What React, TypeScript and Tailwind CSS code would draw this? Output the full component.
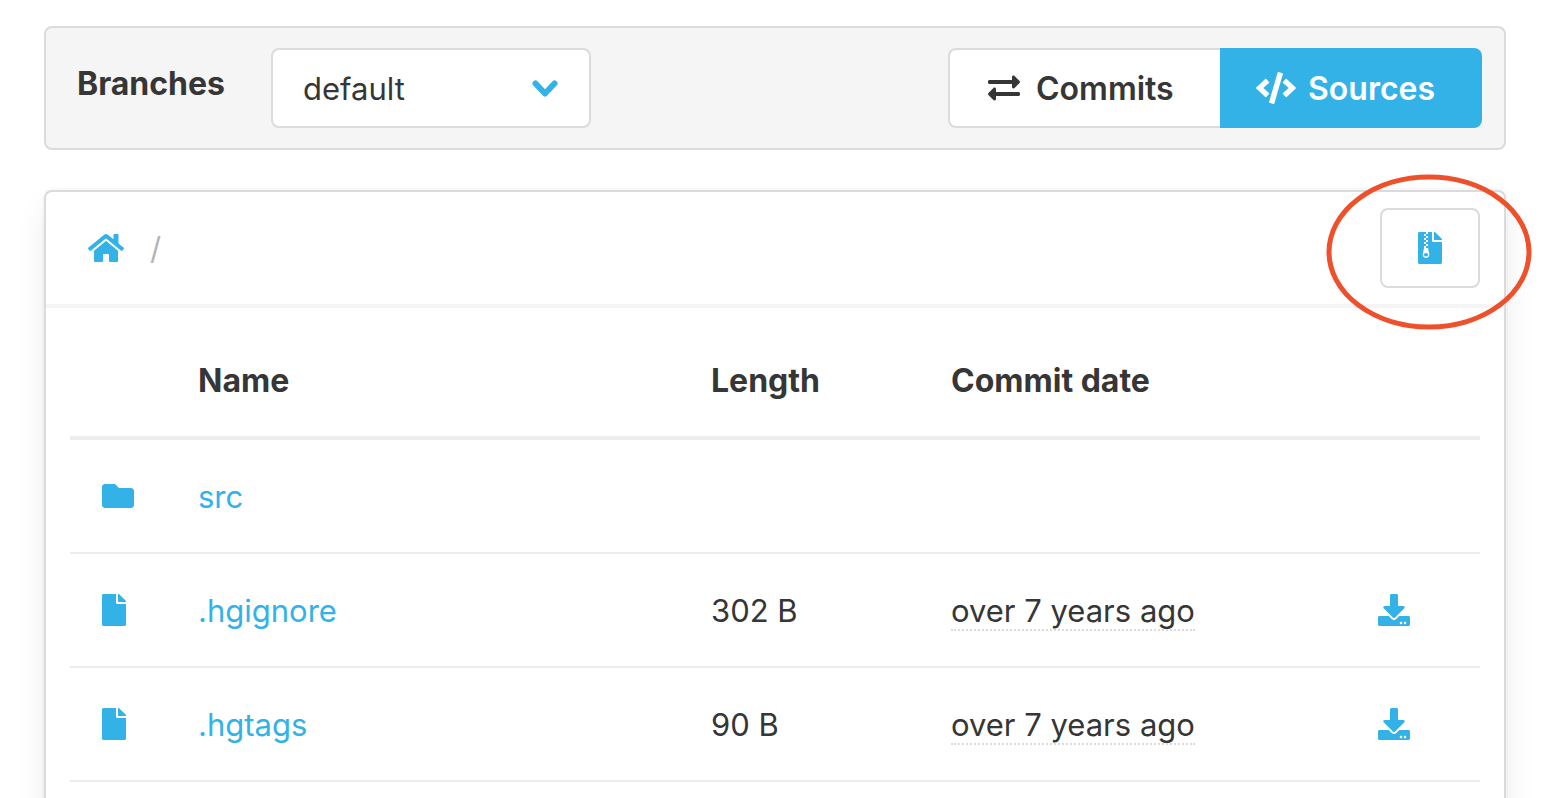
import { FaCode, FaDownload, FaExchangeAlt, FaFile, FaFileArchive, FaFolder, FaHome } from "react-icons/fa";

type Entry = {
  name: string;
  kind: "folder" | "file";
  length?: string;
  date?: string;
};

const entries: Entry[] = [
  { name: "src", kind: "folder" },
  { name: ".hgignore", kind: "file", length: "302 B", date: "over 7 years ago" },
  { name: ".hgtags", kind: "file", length: "90 B", date: "over 7 years ago" },
];

const headCell = "pt-[25px] pb-[31px] text-[32px] font-bold";
const textCell = "pt-[33px] pb-[31px]";

function BranchBar() {
  return (
    <div className="flex items-start justify-between rounded-lg border-2 border-[#dbdbdb] bg-[#f5f5f5] py-5 pr-[22px] pl-[31px]">
      <div className="flex items-start">
        <label htmlFor="branch" className="w-[194px] pt-3 text-[32px] font-bold">
          Branches
        </label>
        <div className="relative">
          <select
            id="branch"
            className="block h-20 w-80 appearance-none rounded-lg border-2 border-[#dbdbdb] bg-white pt-0.5 pr-20 pl-[30px]"
          >
            <option>default</option>
          </select>
          <svg
            className="pointer-events-none absolute top-8 right-8 h-[18px] w-7"
            viewBox="0 0 28 18"
            fill="none"
            stroke="#33b2e8"
            strokeWidth="6"
            strokeLinecap="round"
            strokeLinejoin="round"
          >
            <path d="M4.500 3.500 14 13.500 23.500 3.500" />
          </svg>
        </div>
      </div>
      <div className="flex text-[32px] font-semibold">
        <button className="flex h-20 w-[272px] items-center gap-4 rounded-l-lg border-2 border-r-0 border-[#dbdbdb] bg-white pl-[38px]">
          <FaExchangeAlt size={32} />
          <span className="pt-0.5">Commits</span>
        </button>
        <button className="flex h-20 w-[262px] items-center gap-3 rounded-r-lg bg-[#33b2e8] pl-9 text-white">
          <FaCode className="h-8 w-10" />
          <span className="pt-0.5">Sources</span>
        </button>
      </div>
    </div>
  );
}

function PathBar() {
  return (
    <div className="flex items-center justify-between border-b-4 border-[#f5f5f5] py-4 pr-6 pl-[42px]">
      <nav aria-label="Path" className="flex items-center gap-[26px]">
        <a href="#root" aria-label="Root folder" className="text-[#33b2e8]">
          <FaHome className="h-8 w-9" />
        </a>
        <span className="pt-0.5 text-[#b5b5b5]">/</span>
      </nav>
      <div className="relative">
        <button
          aria-label="Download archive"
          className="flex h-20 w-[100px] items-center justify-center rounded-lg border-2 border-[#dbdbdb] bg-white text-[#33b2e8]"
        >
          <FaFileArchive className="h-8 w-6" />
        </button>
        <svg
          className="pointer-events-none absolute -top-[34px] -left-[54px] h-[156px] w-[206px] max-w-none"
          viewBox="0 0 206 156"
          fill="none"
        >
          <ellipse cx="103" cy="78" rx="100" ry="75" stroke="#ee502c" strokeWidth="5" />
        </svg>
      </div>
    </div>
  );
}

function FileRow({ entry }: { entry: Entry }) {
  return (
    <tr className="border-b-2 border-[#ededed]">
      <td className="py-8 pl-8 text-[#33b2e8]">
        {entry.kind === "folder" ? <FaFolder className="h-8 w-8" /> : <FaFile className="h-8 w-6" />}
      </td>
      <td className={textCell}>
        <a href={`#${entry.name}`} className="block text-[#33b2e8]">
          {entry.name}
        </a>
      </td>
      <td className={textCell}>{entry.length}</td>
      <td className={textCell}>
        {entry.date && <time className="border-b-2 border-dotted border-[#dbdbdb]">{entry.date}</time>}
      </td>
      <td className="py-8">
        {entry.kind === "file" && (
          <a href={`#download-${entry.name}`} aria-label={`Download ${entry.name}`} className="block text-[#33b2e8]">
            <FaDownload size={32} />
          </a>
        )}
      </td>
    </tr>
  );
}

export default function App() {
  return (
    <div className="flex h-screen flex-col gap-10 overflow-hidden bg-white px-11 pt-[26px] font-['Inter',sans-serif] text-[31px] leading-[48px] text-[#363636]">
      <BranchBar />
      <main className="shrink-0 rounded-lg border-2 border-[#dbdbdb] bg-white pb-12 shadow-[0_16px_32px_-4px_rgba(10,10,10,0.1),0_0_0_2px_rgba(10,10,10,0.02)]">
        <PathBar />
        <div className="px-6 pt-6">
          <table className="w-full table-fixed border-collapse text-left">
            <colgroup>
              <col className="w-32" />
              <col />
              <col className="w-60" />
              <col className="w-[427px]" />
              <col className="w-[102px]" />
            </colgroup>
            <thead>
              <tr className="border-b-4 border-[#ededed]">
                <td />
                <th scope="col" className={headCell}>Name</th>
                <th scope="col" className={headCell}>Length</th>
                <th scope="col" className={headCell}>Commit date</th>
                <td />
              </tr>
            </thead>
            <tbody>
              {entries.map((entry) => (
                <FileRow key={entry.name} entry={entry} />
              ))}
            </tbody>
          </table>
        </div>
      </main>
    </div>
  );
}
